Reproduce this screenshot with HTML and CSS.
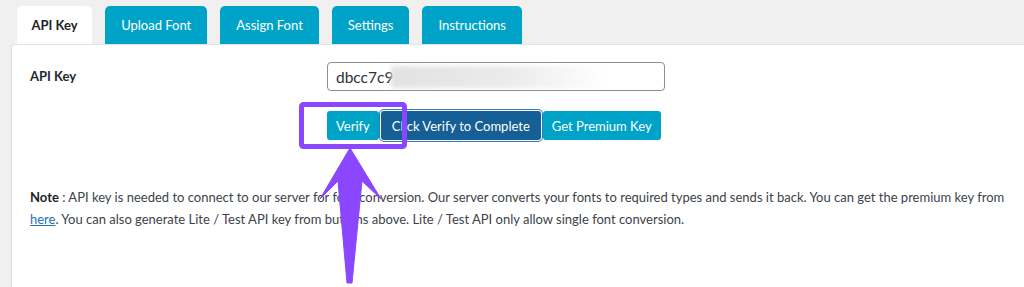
FILE: index.html
```html
<!DOCTYPE html>
<html lang="en">
<head>
  <meta charset="UTF-8" />
  <meta name="viewport" content="width=device-width, initial-scale=1.0" />
  <title>API Key</title>
  <link rel="stylesheet" href="styles.css">
</head>
<body>
  <div class="tabs">
    <div class="tab active">API Key</div>
    <div class="tab">Upload Font</div>
    <div class="tab">Assign Font</div>
    <div class="tab">Settings</div>
    <div class="tab">Instructions</div>
  </div>

  <div class="panel">
    <div class="row">
      <label class="label">API Key</label>
      <div class="field">
        <div class="key-input">dbcc7c9<span class="blur"></span></div>
        <div class="buttons">
          <button class="btn">Verify</button>
          <button class="btn dark">Click Verify to Complete</button>
          <button class="btn">Get Premium Key</button>
        </div>
      </div>
    </div>

    <p class="note">
      <b>Note</b> : API key is needed to connect to our server for font conversion. Our server converts your fonts to required types and sends it back. You can get the premium key from
      <a href="#">here</a>. You can also generate Lite / Test API key from buttons above. Lite / Test API only allow single font conversion.
    </p>
  </div>

  <svg class="callout" width="1024" height="287" viewBox="0 0 1024 287">
    <rect x="301.5" y="104.5" width="103" height="42" rx="2" fill="none" stroke="#8b46ff" stroke-width="5"/>
    <polygon points="350,148 381,199 362,181 352,283 347,283 338,181 320,199" fill="#8b46ff" stroke="#8b46ff" stroke-width="1" stroke-linejoin="round"/>
  </svg>
</body>
</html>
```

FILE: styles.css
```css
body {
  margin: 0;
  height: 287px;
  overflow: hidden;
  position: relative;
  display: flex;
  flex-direction: column;
  background-color: #f0f0f0;
  font-family: Lato, "Open Sans", sans-serif;
  font-size: 13px;
  color: #3c434a;
}

.tabs {
  display: flex;
  gap: 13px;
  padding: 6px 0 0 17px;
}

.tab {
  height: 38px;
  padding: 0 16px;
  display: flex;
  align-items: center;
  background-color: #00a3c8;
  color: #fff;
  border-radius: 5px 5px 0 0;
}

.tab.active {
  background-color: #fff;
  color: #1d2327;
  font-weight: 700;
  padding: 0 14.5px;
}

.panel {
  flex: 1;
  margin-left: 11px;
  background-color: #fff;
  border-left: 1px solid #dcdcde;
  border-top: 1px solid #e4e4e4;
  border-radius: 4px 0 0 0;
  padding: 17px 12px 0 18px;
}

.row {
  display: flex;
}

.label {
  width: 297px;
  padding-top: 6px;
  font-weight: 700;
  color: #23282d;
}

.key-input {
  width: 320px;
  height: 27px;
  padding: 0 8px;
  border: 1px solid #8c8f94;
  border-radius: 4px;
  display: flex;
  align-items: center;
  font-size: 15.5px;
  color: #2c3338;
  overflow: hidden;
}

.blur {
  display: inline-block;
  width: 215px;
  height: 22px;
  margin-left: -2px;
  background: linear-gradient(to right, #e2e2e2, #ebebeb 55%, #fff);
  filter: blur(2px);
}

.buttons {
  display: flex;
  gap: 2px;
  margin-top: 20px;
}

.btn {
  height: 29px;
  padding: 0 9px;
  border: none;
  border-radius: 3px;
  background-color: #00a3c8;
  color: #fff;
  font-family: inherit;
  font-size: 13px;
  cursor: pointer;
}

.btn.dark {
  padding: 0 11px;
  background-color: #155e96;
  box-shadow: 0 0 0 1px #fff, 0 0 0 2px #2f79b5;
}

.note {
  margin: 46px 0 0;
  line-height: 22px;
  color: #3c434a;
}

.note b {
  font-weight: 700;
  color: #1d2327;
}

.note a {
  color: #2271b1;
}

.callout {
  position: absolute;
  top: 0;
  left: 0;
  pointer-events: none;
}
```
